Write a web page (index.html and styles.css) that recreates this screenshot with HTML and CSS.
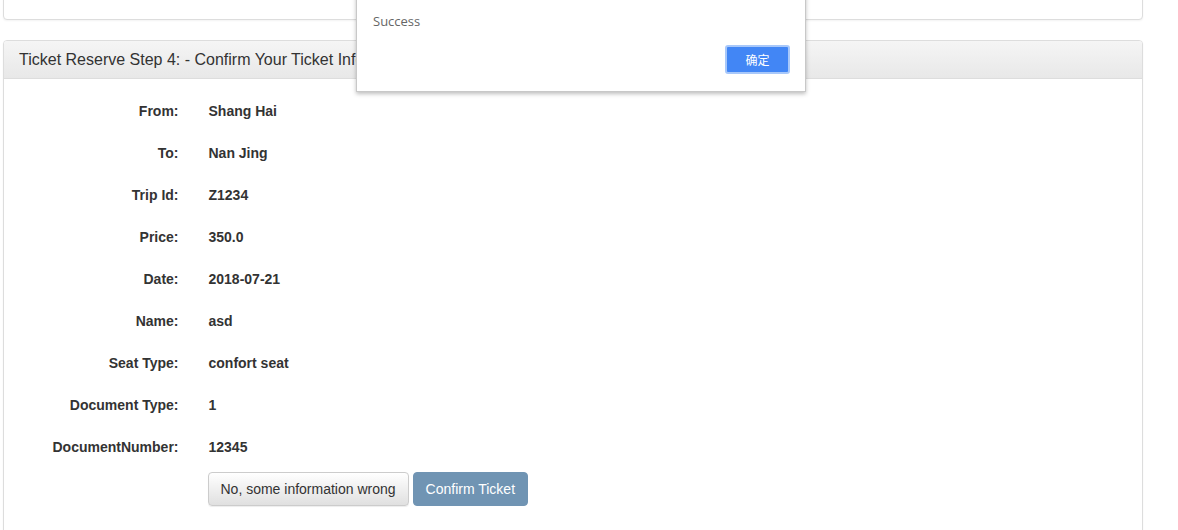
FILE: index.html
```html
<!DOCTYPE html>
<html>
<head>
<meta charset="utf-8">
<link rel="stylesheet" href="styles.css">
</head>
<body>
<div class="page">
  <div class="panel panel-top"></div>
  <div class="panel">
    <div class="panel-heading">Ticket Reserve Step 4: - Confirm Your Ticket Information</div>
    <div class="panel-body">
      <div class="row"><div class="label">From:</div><div class="value">Shang Hai</div></div>
      <div class="row"><div class="label">To:</div><div class="value">Nan Jing</div></div>
      <div class="row"><div class="label">Trip Id:</div><div class="value">Z1234</div></div>
      <div class="row"><div class="label">Price:</div><div class="value">350.0</div></div>
      <div class="row"><div class="label">Date:</div><div class="value">2018-07-21</div></div>
      <div class="row"><div class="label">Name:</div><div class="value">asd</div></div>
      <div class="row"><div class="label">Seat Type:</div><div class="value">confort seat</div></div>
      <div class="row"><div class="label">Document Type:</div><div class="value">1</div></div>
      <div class="row"><div class="label">DocumentNumber:</div><div class="value">12345</div></div>
      <div class="row buttons">
        <div class="label"></div>
        <div class="actions">
          <button class="btn btn-default">No, some information wrong</button>
          <button class="btn btn-primary">Confirm Ticket</button>
        </div>
      </div>
    </div>
  </div>
</div>
<div class="dialog">
  <div class="dialog-msg">Success</div>
  <div class="dialog-foot"><button class="dialog-btn">确定</button></div>
</div>
</body>
</html>
```
FILE: styles.css
```css
html, body {
  margin: 0;
  padding: 0;
  background: #fff;
  font-family: "Liberation Sans", Arial, sans-serif;
  font-size: 14px;
  color: #333;
  overflow: hidden;
  height: 530px;
}
.page {
  padding-left: 3px;
  width: 1140px;
}
.panel {
  border: 1px solid #ddd;
  border-radius: 4px;
  background: #fff;
  margin-bottom: 20px;
  box-shadow: 0 1px 2px rgba(0,0,0,0.05);
}
.panel-top {
  height: 28px;
  margin-top: -10px;
}
.panel-heading {
  padding: 10px 15px 9px;
  font-size: 16px;
  line-height: 17.6px;
  color: #333;
  border-bottom: 1px solid #ddd;
  border-radius: 3px 3px 0 0;
  background: linear-gradient(to bottom, #f5f5f5 0%, #e8e8e8 100%);
}
.panel-body {
  padding: 15px 0 0;
  height: 440px;
}
.row {
  display: flex;
  margin-bottom: 15px;
}
.label {
  width: 174.5px;
  padding: 7px 15px 0 0;
  text-align: right;
  font-weight: bold;
  line-height: 20px;
}
.value {
  padding: 7px 0 0 15px;
  font-weight: bold;
  line-height: 20px;
}
.actions {
  padding-left: 14px;
  display: flex;
  gap: 4px;
}
.btn {
  font-family: "Liberation Sans", Arial, sans-serif;
  font-size: 14px;
  line-height: 20px;
  padding: 6px 12px;
  border-radius: 4px;
  height: 34px;
  box-sizing: border-box;
  cursor: pointer;
}
.btn-default {
  color: #333;
  border: 1px solid #ccc;
  background: linear-gradient(to bottom, #fff 0%, #e0e0e0 100%);
  box-shadow: inset 0 1px 0 rgba(255,255,255,.15), 0 1px 1px rgba(0,0,0,.075);
}
.btn-primary {
  color: #fff;
  border: 1px solid #7094b3;
  background: #7094b3;
}
.dialog {
  position: absolute;
  left: 356px;
  top: -10px;
  width: 448px;
  height: 100px;
  background: #fff;
  border: 1px solid #c8c8c8;
  box-shadow: 0 2px 4px rgba(0,0,0,0.25);
  font-family: "Open Sans", "Noto Sans CJK SC", sans-serif;
}
.dialog-msg {
  padding: 20px 0 0 16px;
  font-size: 13px;
  line-height: 20px;
  color: #666;
}
.dialog-foot {
  display: flex;
  justify-content: flex-end;
  padding: 14px 15px 0 0;
}
.dialog-btn {
  width: 65px;
  height: 29px;
  box-sizing: border-box;
  background: #4286f5;
  border: 2px solid #a8c8fa;
  border-radius: 3px;
  color: #fff;
  font-family: "Noto Sans CJK SC", sans-serif;
  font-size: 12px;
  padding: 0;
}
```
